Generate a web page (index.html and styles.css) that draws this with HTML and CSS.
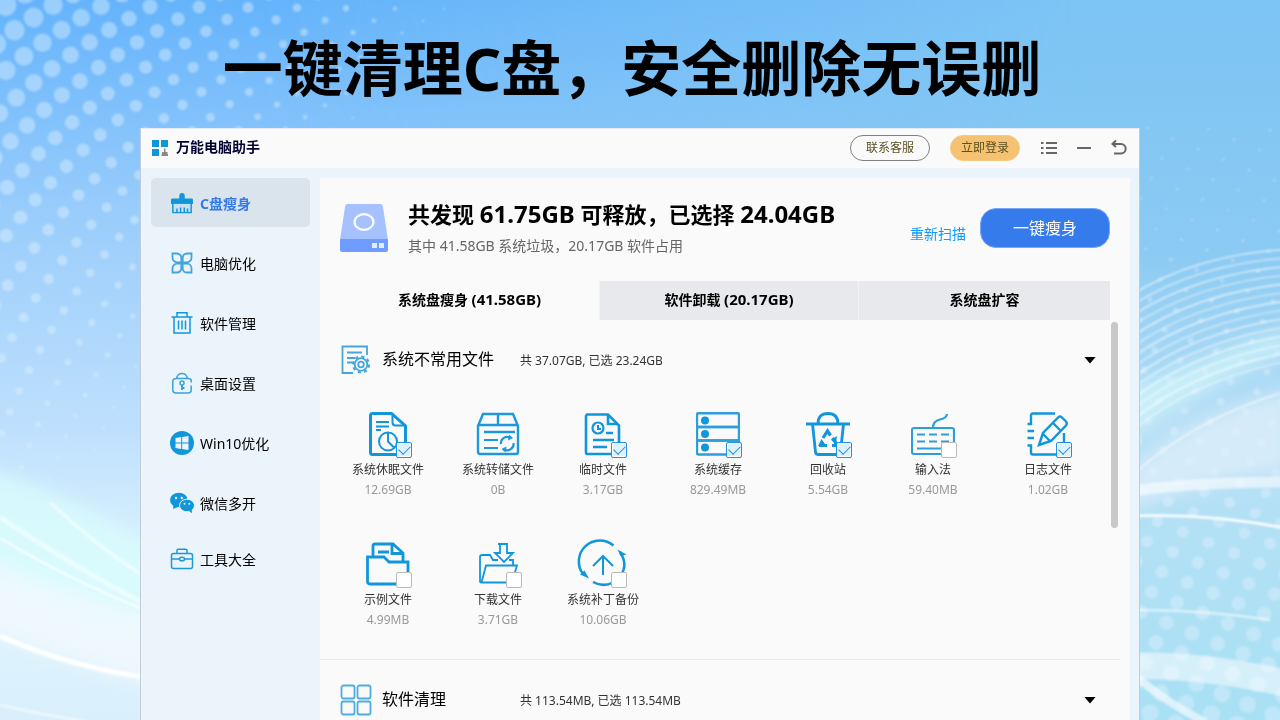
FILE: index.html
```html
<!DOCTYPE html>
<html lang="zh-CN">
<head>
<meta charset="utf-8">
<meta name="viewport" content="width=device-width, initial-scale=1">
<title>万能电脑助手</title>
<link rel="stylesheet" href="styles.css">
</head>
<body>
<svg class="backdrop" viewBox="0 0 1280 720" preserveAspectRatio="xMidYMid slice" aria-hidden="true">
  <defs>
    <linearGradient id="sky" x1="0" y1="0" x2="0" y2="1">
      <stop offset="0" stop-color="#64b3fb"/><stop offset=".3" stop-color="#9acdfb"/>
      <stop offset=".6" stop-color="#bfe0fd"/><stop offset=".8" stop-color="#dff5fd"/><stop offset="1" stop-color="#d9effc"/>
    </linearGradient>
    <linearGradient id="skyRight" x1="0" y1="0" x2="0" y2="1">
      <stop offset="0" stop-color="#7cc4f4"/><stop offset=".35" stop-color="#8bcaf3"/>
      <stop offset=".6" stop-color="#b8e0f6"/><stop offset="1" stop-color="#a9e0f4"/>
    </linearGradient>
    <linearGradient id="fade" x1="0" y1="0" x2="1" y2="0">
      <stop offset=".2" stop-color="#000"/><stop offset=".85" stop-color="#fff"/>
    </linearGradient>
    <mask id="rightMask"><rect width="1280" height="720" fill="url(#fade)"/></mask>
    <filter id="soft" x="-20%" y="-20%" width="140%" height="140%"><feGaussianBlur stdDeviation="1"/></filter>
    <filter id="haze" x="-20%" y="-20%" width="140%" height="140%"><feGaussianBlur stdDeviation="9"/></filter>
  </defs>
  <rect width="1280" height="720" fill="url(#sky)"/>
  <rect width="1280" height="720" fill="url(#skyRight)" mask="url(#rightMask)"/>
  <g filter="url(#haze)">
    <path d="M-20 468Q70 490 170 560V650Q60 640 -20 560Z" fill="#d8fbfd" opacity=".85"/>
    <path d="M-20 560Q90 600 170 620V690Q80 670 -20 630Z" fill="#f3f9fe" opacity=".8"/>
    <path d="M1120 392Q1180 370 1240 345L1290 330V350Q1200 390 1120 440Z" fill="#d5f8fb" opacity=".7"/>
    <path d="M1130 470Q1200 410 1290 390V470Q1200 480 1130 510Z" fill="#ddeefa" opacity=".8"/>
  </g>
  <g filter="url(#soft)">
    <g id="dots" fill="#dff1ff"></g>
    <g id="arcs" fill="none" stroke="#fff" stroke-width="1.6"></g>
    <g fill="none" stroke="#fff">
      <path d="M0 517Q70 565 160 612" stroke-width="5" opacity=".5"/>
      <path d="M0 538Q65 578 150 612" stroke-width="2"/>
      <path d="M50 502Q95 546 150 580" stroke-width="3" opacity=".6"/>
      <path d="M0 636Q70 667 150 678" stroke-width="5"/>
      <path d="M0 705Q50 716 90 722" stroke-width="3" opacity=".5"/>
      <path d="M1130 491Q1200 482 1290 482" stroke-width="11" opacity=".55"/>
      <path d="M1130 516Q1210 513 1290 529" stroke-width="2.5"/>
      <path d="M1130 610Q1200 609 1270 620" stroke-width="2" opacity=".7"/>
      <path d="M1130 666Q1200 664 1290 684" stroke-width="27" opacity=".5"/>
      <path d="M1135 676Q1170 705 1205 722" stroke-width="8" opacity=".6"/>
      <path d="M1130 478Q1190 420 1290 390" stroke-width="2" opacity=".5"/>
    </g>
  </g>
</svg>

<!-- Shared line icons -->
<svg class="sprite" aria-hidden="true">
  <symbol id="i-brush" viewBox="0 0 24 24"><path d="M9 4.500q0-3.500 3-3.500t3 3.500v2.500H22.500q1.500 0 1.500 1.500V13H0V8.500Q0 7 1.500 7H9z" fill="#1296db"/><path d="M2 13h20v9.500H2z" fill="#c9e1f0"/><path d="M2 13v9.500h20V13M6.500 22v-4M10.500 22v-5M14.500 22v-5M18 22v-4" fill="none" stroke="#1296db" stroke-width="1.600"/></symbol>
  <symbol id="i-clover" viewBox="0 0 24 24" fill="none" stroke="#43a5db" stroke-width="1.800"><path d="M2.500 2.500H7a4.300 4.300 0 0 1 4.300 4.300v4.500H7a4.500 4.500 0 0 1-4.500-4.500zM21.500 2.500H17a4.300 4.300 0 0 0-4.300 4.300v4.500H17a4.500 4.500 0 0 0 4.500-4.500zM2.500 21.500H7a4.300 4.300 0 0 0 4.300-4.300v-4.500H7a4.500 4.500 0 0 0-4.500 4.500zM21.500 21.500H17a4.300 4.300 0 0 1-4.300-4.300v-4.500H17a4.500 4.500 0 0 1 4.500 4.500z"/></symbol>
  <symbol id="i-trash" viewBox="0 0 24 24" fill="none" stroke="#1296db" stroke-width="1.500"><path d="M1.500 6h21M7 5.500V1.700h10v3.800M4 6v16h16V6M8.500 9.500v9M12 9.500v9M15.500 9.500v9"/></symbol>
  <symbol id="i-lock" viewBox="0 0 24 24" fill="none" stroke="#3aa3dc" stroke-width="1.500"><path d="M21.200 11.500V9.500q0-2-3-2H6q-3.200 0-3.200 3v8.500q0 3 3.200 3h12q3.200 0 3.200-3v-4.500M6.500 7.500q1-5 5.500-5t5.500 5"/><circle cx="12" cy="12" r="2"/><path d="M12 14v5M12 17h2.500" stroke-width="2"/></symbol>
  <symbol id="i-win" viewBox="0 0 24 24"><circle cx="12" cy="12" r="12" fill="#1296db"/><path d="M5.500 7 11.200 6v5.500H5.500zM12.200 5.900 18.500 5v6.500h-6.300zM5.500 12.500h5.700V18l-5.700-.9zM12.200 12.500h6.300V19l-6.300-.9z" fill="#eef6fd"/></symbol>
  <symbol id="i-wechat" viewBox="0 0 24 24"><ellipse cx="8.800" cy="9" rx="8.800" ry="7.300" fill="#1296db"/><path d="M3.500 13.500 3 18l5-2z" fill="#1296db"/><ellipse cx="17" cy="14.500" rx="7.500" ry="6.300" fill="#1296db" stroke="#ebf3fb" stroke-width="1"/><path d="m19 20 3 2.200-.2-4z" fill="#1296db"/><g fill="#ebf3fb"><circle cx="6" cy="7" r="1.200"/><circle cx="11.800" cy="7" r="1.200"/><circle cx="14.500" cy="12.800" r="1"/><circle cx="19.300" cy="12.800" r="1"/></g></symbol>
  <symbol id="i-case" viewBox="0 0 24 24" fill="none" stroke="#1c98dc" stroke-width="1.500"><rect x="1.500" y="6.500" width="21" height="15" rx="2"/><path d="M7 6V3.500q0-1.300 1.300-1.300h7.400q1.300 0 1.300 1.300V6M1.500 12h7.700M14.800 12h7.700"/><ellipse cx="12" cy="12" rx="2.600" ry="1.800"/></symbol>

  <symbol id="i-sleep" viewBox="0 0 44 44" fill="none" stroke="#1296db" stroke-width="3"><path d="M6.500 1.500h19L39.500 14v27q0 1.500-1.500 1.500H6.500q-2 0-2-2v-37q0-2 2-2z"/><path d="M26.500 2v8.500q0 3 3 3h9M10 10h13M10 14.500h13M10 18h5" stroke-width="2"/><circle cx="22" cy="29.500" r="9" stroke-width="2"/><path d="M22 20.500v9l6 6" stroke-width="2"/></symbol>
  <symbol id="i-box" viewBox="0 0 44 44" fill="none" stroke="#1c98dc" stroke-width="2.400"><path d="M2 14 7 2h30l5 12v26q0 2-2 2H4q-2 0-2-2zM2 13h40M22 2v11M8 20h31"/><path d="M8 28h14M8 36h14" stroke-width="2.200"/><path d="M25 32a6.300 6.300 0 0 1 9.500-6.200M37.500 31a6.300 6.300 0 0 1-9.500 6.300" stroke-width="2.200"/><path d="m33 22.500 4 3.500-5 2.500zM29.500 40.500l-4-3.500 5-2.500z" fill="#1c98dc" stroke="none"/></symbol>
  <symbol id="i-temp" viewBox="0 0 44 44" fill="none" stroke="#1296db" stroke-width="2.600"><path d="M6 2.500h21l11 11V40q0 2-2 2H6q-1 0-1-2V4z"/><path d="M27 3v9h10M12 28h21M12 35h14M25 21h7"/><circle cx="17" cy="16" r="5.500" stroke-width="2.200"/><path d="M17 13v4h3" stroke-width="2"/></symbol>
  <symbol id="i-cache" viewBox="0 0 44 44" fill="none" stroke="#2c9ed9" stroke-width="2.400"><rect x="1" y="1.200" width="42" height="13.800" rx="1.500"/><rect x="1" y="15" width="42" height="13.500" rx="1.500"/><rect x="1" y="28.500" width="42" height="14" rx="1.500"/><g fill="#1296db" stroke="none"><circle cx="9" cy="8.500" r="4"/><circle cx="9" cy="22" r="4"/><circle cx="9" cy="35.500" r="4"/></g></symbol>
  <symbol id="i-recycle" viewBox="0 0 44 44" fill="none" stroke="#1296db" stroke-width="2.800"><path d="M0 12h44M12 12q0-10.500 10-10.500T32 12M6.500 12l3 28q.3 2.500 3 2.500h19q2.700 0 3-2.500l3-28"/><path d="m17 26 4.500-7 3 4.500M13 33.500h8M26.500 26l5 7.500H26" stroke-width="3.200"/><path d="m12 34 3.500-7 3.500 5zM31 24l-1 7-5-3z" fill="#1296db" stroke="none"/></symbol>
  <symbol id="i-keyboard" viewBox="0 0 44 44" fill="none" stroke="#2c9ed9" stroke-width="2.200"><rect x="1" y="16" width="42" height="26" rx="2"/><path d="M22 16q0-7 7-8.500T36 2"/><path d="M6 22.500h8M18 22.500h8M30 22.500h8M6 29.500h8M18 29.500h8M30 29.500h8M6 36.500h26"/></symbol>
  <symbol id="i-log" viewBox="0 0 44 44" fill="none" stroke="#1296db" stroke-width="2.400"><path d="M29 1.500H7q-2 0-2 2V12H1.500M1.500 19h6.500M1.500 26h6.500M1.500 33.500H5v7q0 2 2 2h31V21"/><path d="m13 33 4-12L32 5.500q2-2 4 0l4 4q1.500 2 0 4L25 29zM27 11l7 7M17 22l7 7"/></symbol>
  <symbol id="i-sample" viewBox="0 0 44 44" fill="none" stroke="#1296db" stroke-width="2.800"><path d="M22 20h20v20q0 2-2 2H4q-2.500 0-2.500-2.500V15H18l5 5M7 14V4q0-2 2-2h18l10 9v8M26 2v9.500h10M12 10h11"/></symbol>
  <symbol id="i-download" viewBox="0 0 44 44" fill="none" stroke="#1296db" stroke-width="1.800"><path d="M6 40.500h30l5-17H10L5.500 40.500Q4 41 4 39V15q0-2 2-2h8l3 5h5M33 18h4v5M22 2h9v9h6l-9 9-9-9h5V2"/></symbol>
  <symbol id="i-backup" viewBox="0 0 44 44" fill="none" stroke="#1296db" stroke-width="2.500" overflow="visible"><path d="M32.500 3.500A21 21 0 0 0 2 32M39 10q10 15-3 28M32 40.500Q22 45.500 12 40"/><path d="M36.500 7.500 45.500 12.500l-6 1.500zM-1 32.500l9 4-4.500-8z" fill="#1296db" stroke="none"/><path d="M22 33V14M12 24l10-10 10 10" stroke-width="2"/></symbol>
</svg>

<main class="page">
  <h1 class="headline">一键清理C盘，安全删除无误删</h1>
  <div class="window">
    <header class="titlebar">
      <svg class="logo" viewBox="0 0 18 18" aria-hidden="true"><path d="M1 1h7v7H1zM10 1h7v7h-7zM1 10h7v7H1z" fill="#1296db"/><path d="M13 9.500h1.500V13h2v2h.5v2h-6.500v-2h.5v-2h2z" fill="#8a8a8a"/></svg>
      <span class="brand">万能电脑助手</span>
      <button class="pill" type="button">联系客服</button>
      <button class="pill pill-gold" type="button">立即登录</button>
      <div class="controls">
        <button type="button" aria-label="菜单"><svg viewBox="0 0 18 18"><path d="M1 4h2.500M6 4h11M1 9h2.500M6 9h11M1 14h2.500M6 14h11"/></svg></button>
        <button type="button" aria-label="最小化"><svg viewBox="0 0 18 18"><path d="M2 9h14"/></svg></button>
        <button type="button" aria-label="返回"><svg viewBox="0 0 18 18"><path d="M6 1.500 2.500 5 6 8M2.500 5h8.500a4.700 4.700 0 0 1 0 9.400H4"/></svg></button>
      </div>
    </header>
    <div class="body">
      <nav class="sidebar">
        <a class="nav active" href="#disk"><svg><use href="#i-brush"/></svg>C盘瘦身</a>
        <a class="nav" href="#tune"><svg><use href="#i-clover"/></svg>电脑优化</a>
        <a class="nav" href="#apps"><svg><use href="#i-trash"/></svg>软件管理</a>
        <a class="nav" href="#desktop"><svg><use href="#i-lock"/></svg>桌面设置</a>
        <a class="nav" href="#win10"><svg><use href="#i-win"/></svg>Win10优化</a>
        <a class="nav" href="#wechat"><svg><use href="#i-wechat"/></svg>微信多开</a>
        <a class="nav nav-short" href="#tools"><svg><use href="#i-case"/></svg>工具大全</a>
      </nav>
      <section class="content">
        <div class="summary">
          <svg class="drive" viewBox="0 0 48 48" aria-hidden="true"><path d="M7.500 0h33q2 0 2.300 2L48 36H0L5.200 2Q5.500 0 7.500 0z" fill="#a6c1ff"/><path d="M0 35h48v11q0 2-2 2H2q-2 0-2-2z" fill="#6f9dff"/><ellipse cx="24" cy="18" rx="9.500" ry="7.800" fill="none" stroke="#fff" stroke-width="2.200"/><path d="M32 39h5v5h-5zM39 39h5v5h-5z" fill="#e4edff"/></svg>
          <div class="summary-text">
            <h2>共发现 <b>61.75GB</b> 可释放，已选择 <b>24.04GB</b></h2>
            <p>其中 41.58GB 系统垃圾，20.17GB 软件占用</p>
          </div>
          <a class="rescan" href="#rescan">重新扫描</a>
          <button class="primary" type="button">一键瘦身</button>
        </div>
        <div class="tabs" role="tablist">
          <button class="tab selected" type="button" role="tab" aria-selected="true">系统盘瘦身 <b>(41.58GB)</b></button>
          <button class="tab" type="button" role="tab">软件卸载 <b>(20.17GB)</b></button>
          <button class="tab" type="button" role="tab">系统盘扩容</button>
        </div>
        <div class="scroller">
          <span class="thumb"></span>
          <section class="group">
            <header class="group-head">
              <svg class="group-icon" viewBox="0 0 32 32" fill="none" stroke="#44a5dc" stroke-width="1.800" aria-hidden="true"><path d="M27 11V2.500H2.500V29H13M7 8.500h15M7 14h8M7 18.500h5"/><circle cx="21" cy="20.500" r="6.300"/><circle cx="21" cy="20.500" r="2.800"/><circle cx="21" cy="20.500" r="8" stroke-width="2.200" stroke-dasharray="3.140 3.140"/></svg>
              <h3>系统不常用文件</h3>
              <p>共 37.07GB, 已选 23.24GB</p>
              <button class="caret" type="button" aria-label="折叠"></button>
            </header>
            <div class="files">
              <label class="file"><span class="art"><svg><use href="#i-sleep"/></svg><input type="checkbox" checked></span><span>系统休眠文件</span><small>12.69GB</small></label>
              <div class="file"><span class="art"><svg><use href="#i-box"/></svg></span><span>系统转储文件</span><small>0B</small></div>
              <label class="file"><span class="art"><svg><use href="#i-temp"/></svg><input type="checkbox" checked></span><span>临时文件</span><small>3.17GB</small></label>
              <label class="file"><span class="art"><svg><use href="#i-cache"/></svg><input type="checkbox" checked></span><span>系统缓存</span><small>829.49MB</small></label>
              <label class="file"><span class="art"><svg><use href="#i-recycle"/></svg><input type="checkbox" checked></span><span>回收站</span><small>5.54GB</small></label>
              <label class="file"><span class="art"><svg><use href="#i-keyboard"/></svg><input type="checkbox"></span><span>输入法</span><small>59.40MB</small></label>
              <label class="file"><span class="art"><svg><use href="#i-log"/></svg><input type="checkbox" checked></span><span>日志文件</span><small>1.02GB</small></label>
              <label class="file"><span class="art"><svg><use href="#i-sample"/></svg><input type="checkbox"></span><span>示例文件</span><small>4.99MB</small></label>
              <label class="file"><span class="art"><svg><use href="#i-download"/></svg><input type="checkbox"></span><span>下载文件</span><small>3.71GB</small></label>
              <label class="file"><span class="art"><svg><use href="#i-backup"/></svg><input type="checkbox"></span><span>系统补丁备份</span><small>10.06GB</small></label>
            </div>
          </section>
          <section class="group">
            <header class="group-head">
              <svg class="group-icon" viewBox="0 0 32 32" fill="none" stroke="#4dacdf" stroke-width="1.800" aria-hidden="true"><rect x="1.500" y="1.500" width="13" height="13" rx="2"/><rect x="17.500" y="1.500" width="13" height="13" rx="2"/><rect x="1.500" y="17.500" width="13" height="13" rx="2"/><rect x="17.500" y="17.500" width="13" height="13" rx="2"/></svg>
              <h3>软件清理</h3>
              <p>共 113.54MB, 已选 113.54MB</p>
              <button class="caret" type="button" aria-label="折叠"></button>
            </header>
          </section>
        </div>
      </section>
    </div>
  </div>
</main>
<script src="backdrop.js"></script>
</body>
</html>
```
FILE: styles.css
```css
* { box-sizing: border-box; }

body {
  margin: 0;
  height: 100vh;
  overflow: hidden;
  background: #9acdfb;
  color: #000;
  font-family: "Noto Sans", "Noto Sans CJK SC", sans-serif;
  font-size: 14px;
}

h1, h2, h3, p { margin: 0; }
b { font-weight: 700; }
button { font: inherit; color: inherit; border: 0; background: none; padding: 0; cursor: pointer; }
a { text-decoration: none; color: inherit; }

.backdrop { position: fixed; inset: 0; width: 100%; height: 100%; z-index: -1; }
.sprite { position: absolute; width: 0; height: 0; }

.page { height: 100%; display: flex; flex-direction: column; align-items: center; }

.headline {
  height: 128px;
  flex: none;
  padding: 8px 16px 0 0;
  font-size: 60px;
  line-height: 120px;
  font-weight: 700;
  white-space: nowrap;
}

.window {
  width: 100%;
  max-width: 1000px;
  flex: 1;
  min-height: 0;
  display: flex;
  flex-direction: column;
  background: #ebf3fb;
  border: 1px solid #c3cbd6;
  border-top-color: #e6eaee;
  border-bottom: 0;
}

.titlebar {
  height: 39px;
  flex: none;
  display: flex;
  align-items: center;
  padding: 0 11px 2px 10px;
  background: #fafafa;
}
.logo { width: 18px; height: 18px; margin-right: 7px; }
.brand { flex: 1; line-height: 20px; padding-bottom: 2px; font-weight: 700; color: #000033; }
.pill {
  width: 80px;
  height: 26px;
  border: 1px solid #808080;
  border-radius: 13px;
  font-size: 12px;
  line-height: 22px;
  color: #5a5023;
}
.pill-gold { width: 70px; margin-left: 20px; border-color: #f5c983; background: #f5c271; }
.controls { display: flex; gap: 17px; margin-left: 20px; }
.controls svg { display: block; width: 18px; height: 18px; fill: none; stroke: #666; stroke-width: 2; }

.body { flex: 1; min-height: 0; display: flex; padding: 10px 9px 0 10px; }

.sidebar { width: 169px; flex: none; display: flex; flex-direction: column; gap: 12px; padding-right: 10px; }
.nav { height: 49px; margin-bottom: -1px; flex: none; display: flex; align-items: center; gap: 6px; padding-left: 19px; border-radius: 5px; }
.nav svg { width: 24px; height: 24px; }
.active { background: #dae4ed; color: #357bec; font-weight: 700; }
.active svg { width: 22px; height: 22px; margin: 0 1px; }
.nav-short { height: 41px; }

.content { flex: 1; min-width: 0; display: flex; flex-direction: column; background: #fafafa; }

.summary { flex: none; height: 103px; display: flex; align-items: center; padding: 0 20px 4px; }
.drive { width: 48px; height: 48px; margin-right: 20px; }
.summary-text { flex: 1; white-space: nowrap; }
.summary h2 { font-size: 22px; line-height: 36px; font-weight: 700; }
.summary h2 b { font-size: 24px; }
.summary p { color: #666; line-height: 28px; }
.rescan { color: #0e9aff; margin: 10px 14px 0 0; }
.primary { width: 130px; height: 40px; border: 1px solid #78a8f4; border-radius: 16px; background: #357bec; color: #fff; font-size: 16px; line-height: 34px; }

.tabs { flex: none; height: 39px; display: grid; grid-template-columns: 259fr 259fr 252fr; padding: 0 20px; }
.tab { padding-bottom: 4px; font-weight: 700; background: #e8e9ed; border-left: 1px solid #f2f2f4; }
.tab b { font-size: 15px; }
.selected { background: none; border: 0; }

.scroller { flex: 1; min-height: 0; position: relative; overflow: hidden; }
.thumb { position: absolute; right: 12px; top: 2px; width: 7px; height: 206px; border-radius: 4px; background: #c8c8c8; }

.group { margin-right: 10px; }
.group + .group { border-top: 1px solid #ececec; }
.group-head { height: 80px; display: flex; align-items: center; padding: 0 24px 0 20px; }
.group-icon { width: 32px; height: 32px; margin-right: 10px; }
.group h3 { width: 138px; font-size: 16px; font-weight: 400; line-height: 20px; padding-bottom: 2px; }
.group p { flex: 1; font-size: 12px; line-height: 18px; padding-top: 2px; color: #333; }
.caret { width: 12px; height: 7px; background: #000; clip-path: polygon(0 0, 100% 0, 50% 100%); }

.files {
  display: grid;
  grid-template-columns: 11fr 11fr 10fr 13fr 9fr 12fr 11fr;
  row-gap: 40px;
  padding: 12px 17px 27px 13px;
}
.file { height: 90px; display: flex; flex-direction: column; align-items: center; font-size: 12px; line-height: 20px; color: #333; white-space: nowrap; }
.file small { font-size: 12px; color: #999; }
.art { position: relative; height: 44px; margin-bottom: 4px; }
.art svg { display: block; width: 44px; height: 44px; overflow: visible; }
.art input {
  appearance: none;
  position: absolute;
  left: 30px;
  top: 30px;
  width: 16px;
  height: 16px;
  margin: 0;
  border: 1px solid #bbb;
  border-radius: 2px;
  background: #fff;
}
.art input:checked { border-color: #1e90e8; background: #dcf1fa; box-shadow: inset 0 0 0 1px #fff; }
.art input:checked::after {
  content: "";
  position: absolute;
  left: 2px;
  top: 2px;
  width: 10px;
  height: 6px;
  border: solid #1e86e0;
  border-width: 0 0 1px 1px;
  transform: rotate(-45deg);
}
```
FILE: backdrop.js
```js
// Halftone dots and fanned arcs of the page background.
const NS = "http://www.w3.org/2000/svg";
const dots = document.getElementById("dots");
const arcs = document.getElementById("arcs");

function dot(x, y, r, opacity) {
  const c = document.createElementNS(NS, "circle");
  c.setAttribute("cx", x.toFixed(1));
  c.setAttribute("cy", y.toFixed(1));
  c.setAttribute("r", r.toFixed(1));
  c.setAttribute("opacity", opacity.toFixed(2));
  dots.appendChild(c);
}

// Top-left field: rows bend as they run down, dots shrink with distance.
for (let i = -14; i < 20; i++) {
  let x = 157 + 28 * i, y = 31 + 12.4 * i;
  for (let k = 1; k <= 20; k++) {
    const px = x + 21 * k, py = y - 12 * k, r = 11 - 0.022 * px - 0.017 * py;
    if (r > 1 && px > -12 && py > -12) dot(px, py, r, 0.44);
  }
  for (let j = 0; j < 40; j++) {
    const r = 11 - 0.022 * x - 0.017 * y;
    if (r > 1 && x > -12 && x < 520 && y > -12 && y < 490) dot(x, y, r, 0.44);
    const a = Math.max(103, 150 - 2 * j) * Math.PI / 180;
    x += 23 * Math.cos(a);
    y += 23 * Math.sin(a);
  }
}

// Right-hand field: dots grow towards the bottom edge.
for (let i = -20; i < 20; i++) {
  for (let j = -24; j < 20; j++) {
    const x = 1183 + 25.5 * i - 10.5 * j, y = 532 + 10.5 * i + 20 * j;
    if (x > 1130 && x < 1290 && y > 120 && y < 730) dot(x, y, 1.2 + Math.max(0, y - 220) / 66, 0.42);
  }
}

for (let k = 0; k < 14; k++) {
  const p = document.createElementNS(NS, "path");
  const y = 296 + k * 10.5, end = 249 + k * 8.6;
  p.setAttribute("d", `M1130 ${y}Q1195 ${(y + end) / 2 - 18} 1290 ${end}`);
  p.setAttribute("opacity", k % 2 ? 0.5 : 0.65);
  arcs.appendChild(p);
}
```
